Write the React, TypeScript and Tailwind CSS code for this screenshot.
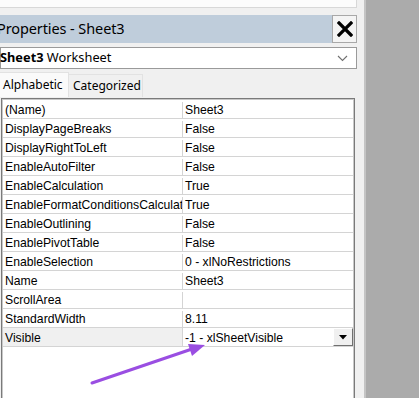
import React from 'react';

type Prop = { name: string; value: string };

const props: Prop[] = [
  { name: '(Name)', value: 'Sheet3' },
  { name: 'DisplayPageBreaks', value: 'False' },
  { name: 'DisplayRightToLeft', value: 'False' },
  { name: 'EnableAutoFilter', value: 'False' },
  { name: 'EnableCalculation', value: 'True' },
  { name: 'EnableFormatConditionsCalculation', value: 'True' },
  { name: 'EnableOutlining', value: 'False' },
  { name: 'EnablePivotTable', value: 'False' },
  { name: 'EnableSelection', value: '0 - xlNoRestrictions' },
  { name: 'Name', value: 'Sheet3' },
  { name: 'ScrollArea', value: '' },
  { name: 'StandardWidth', value: '8.11' },
];

const gridFont = { fontFamily: '"Liberation Sans", Arial, sans-serif' };
const uiFont = { fontFamily: '"Noto Sans", "Open Sans", sans-serif' };

function Row({ name, value }: Prop) {
  return (
    <div className="flex h-[19px] border-b border-[#d4d4d4] bg-white pt-[2px] text-[12.2px] leading-[16px] text-black">
      <div className="w-[180px] shrink-0 overflow-hidden whitespace-nowrap border-r border-[#d4d4d4] pl-[2px]">
        {name}
      </div>
      <div className="flex-1 overflow-hidden whitespace-nowrap pl-[2px]">{value}</div>
    </div>
  );
}

function VisibleRow() {
  return (
    <div className="flex h-[19px] border-b border-[#d4d4d4] text-[12.2px] leading-[16px] text-black">
      <div className="w-[180px] shrink-0 overflow-hidden whitespace-nowrap border-r border-[#d4d4d4] bg-[#f0f0f0] pl-[2px] pt-[2px]">
        Visible
      </div>
      <div className="flex flex-1 items-stretch bg-white pl-[2px]">
        <span className="flex-1 whitespace-nowrap pt-[2px]">-1 - xlSheetVisible</span>
        <div className="flex w-[20px] items-center justify-center border-b border-r border-t border-l border-b-[#707070] border-l-white border-r-[#707070] border-t-white bg-[#f0f0f0]">
          <svg width="8" height="5" viewBox="0 0 8 5">
            <path d="M0 0 H8 L4 4.5 Z" fill="#000" />
          </svg>
        </div>
      </div>
    </div>
  );
}

export default function App() {
  return (
    <div className="relative flex h-[398px] w-[419px] overflow-hidden bg-[#ababab]">
      {/* properties window */}
      <div
        className="flex h-full w-[366px] shrink-0 flex-col overflow-hidden border-r-2 border-[#c4c4c4] bg-[#f0f0f0] pr-[7px]"
        style={gridFont}
      >
        <div className="h-[8px] shrink-0 border-b border-r border-[#d8d8d8] bg-[#fcfcfc]" />
        <div className="h-[7px] shrink-0" />

        {/* title bar */}
        <div className="flex h-[28px] shrink-0">
          <div className="flex flex-1 items-center overflow-hidden bg-[#bfcddb]">
            <span
              className="ml-[-3px] whitespace-nowrap text-[14.5px] tracking-[-0.1px] text-black"
              style={uiFont}
            >
              Properties - Sheet3
            </span>
          </div>
          <div className="flex w-[25px] items-center justify-center border border-[#a8a8a8] bg-[#f4f4f4]">
            <svg width="16" height="16" viewBox="0 0 16 16">
              <path d="M2 2 L14 14 M14 2 L2 14" stroke="#000" strokeWidth="3.2" strokeLinecap="square" />
            </svg>
          </div>
        </div>

        <div className="h-[4px] shrink-0" />

        {/* object combo */}
        <div
          className="flex h-[22px] shrink-0 items-center border border-[#9a9a9a] bg-white pr-[8px] text-[12.8px] text-black"
          style={uiFont}
        >
          <span className="ml-[-1px] whitespace-nowrap">
            <b className="font-bold">Sheet3</b> Worksheet
          </span>
          <svg className="ml-auto" width="11" height="7" viewBox="0 0 11 7">
            <path d="M1 1 L5.5 5.5 L10 1" stroke="#707070" strokeWidth="1.1" fill="none" />
          </svg>
        </div>

        <div className="h-[3px] shrink-0" />

        {/* tabs */}
        <div className="flex h-[25px] shrink-0 items-end text-[12px] text-black" style={uiFont}>
          <div className="flex h-[25px] w-[69px] items-center border-r border-t border-[#e2e2e2] bg-[#fafafa] pl-[3px]">
            Alphabetic
          </div>
          <div className="flex h-[23px] w-[74px] items-center border-r border-t border-[#e2e2e2] bg-[#f0f0f0] pl-[4px]">
            Categorized
          </div>
        </div>

        {/* property grid */}
        <div className="ml-px mt-px flex w-[354px] flex-1 flex-col border-l border-r border-t border-[#7a7a7a] bg-white">
          <div className="flex flex-1 flex-col border-l border-r border-t border-[#c8c8c8]">
            {props.map((p) => (
              <Row key={p.name} {...p} />
            ))}
            <VisibleRow />
          </div>
        </div>
      </div>

      {/* annotation arrow */}
      <svg className="pointer-events-none absolute left-0 top-0" width="419" height="398" viewBox="0 0 419 398">
        <line x1="92" y1="383" x2="192" y2="349" stroke="#9a4ee2" strokeWidth="3" strokeLinecap="round" />
        <polygon points="205,345 188,344 192,356" fill="#9a4ee2" />
      </svg>
    </div>
  );
}
